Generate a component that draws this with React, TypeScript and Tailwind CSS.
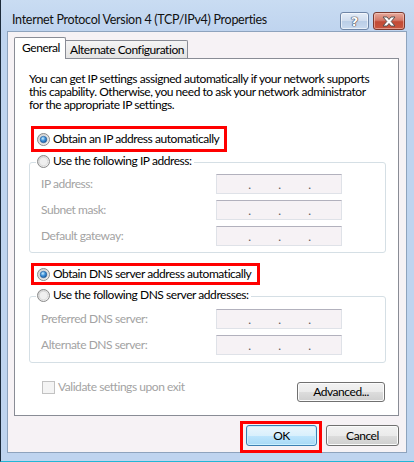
import React from "react";

function Radio({ checked }: { checked?: boolean }) {
  return (
    <svg width="13" height="13" viewBox="0 0 13 13" className="shrink-0 block">
      <defs>
        <linearGradient id="radioBg" x1="0" y1="0" x2="1" y2="1">
          <stop offset="0" stopColor="#cdcdcd" />
          <stop offset="1" stopColor="#f8f8f8" />
        </linearGradient>
        <radialGradient id="radioDot" cx="0.4" cy="0.35" r="0.75">
          <stop offset="0" stopColor="#cdefff" />
          <stop offset="0.45" stopColor="#3f92da" />
          <stop offset="1" stopColor="#0f4d90" />
        </radialGradient>
      </defs>
      <circle cx="6.5" cy="6.5" r="6" fill="url(#radioBg)" stroke="#8a8a8a" />
      <circle cx="6.5" cy="6.5" r="4.2" fill="#efefef" stroke="#d2d2d2" strokeWidth="0.6" />
      {checked && (
        <circle cx="6.5" cy="6.5" r="3.3" fill="url(#radioDot)" stroke="#1b4f8a" strokeWidth="0.5" />
      )}
    </svg>
  );
}

function IpBox() {
  return (
    <div className="w-[126px] h-[20px] border border-[#dfe2e8] border-t-[#b2b1bd] bg-[#f6f2f5] flex items-end pl-[31px] gap-[27px] pb-[3px] text-[12px] leading-[10px] text-[#5a5a5a]">
      <span className="w-[3px] text-center">.</span>
      <span className="w-[3px] text-center">.</span>
      <span className="w-[3px] text-center">.</span>
    </div>
  );
}

function FieldRow({ label }: { label: string }) {
  return (
    <div className="flex items-center h-[20px] pl-[11px]">
      <span className="w-[175px] text-[#a3a3a3] whitespace-nowrap">{label}</span>
      <IpBox />
    </div>
  );
}

export default function App() {
  return (
    <div className="w-[414px] h-[462px] bg-[#bfd4ef] border-l border-l-[#1c2a3a] border-b border-b-[#22b6d6] flex flex-col font-['Lato','Open_Sans',sans-serif] text-[12px] leading-[16px] tracking-[-0.45px] text-black select-none whitespace-nowrap">
      {/* Title bar */}
      <div className="h-[31px] flex shrink-0 bg-[linear-gradient(#c9dcf2,#bfd4ef)]">
        <div className="pl-[11px] pt-[11px] text-[12.5px] leading-[18px] tracking-[-0.3px] text-[#111]">
          Internet Protocol Version 4 (TCP/IPv4) Properties
        </div>
        <div className="ml-auto flex gap-[4px] pt-[12px] pr-[9px]">
          <div className="w-[29px] h-[18px] rounded-[3px] border border-[#6e85a6] bg-[linear-gradient(#e4edf8_0%,#cfdcee_50%,#b9cde6_50%,#c9daef_100%)] shadow-[inset_0_0_0_1px_rgba(255,255,255,0.6)] flex items-center justify-center">
            <span className="font-['DejaVu_Sans',sans-serif] font-bold text-[13px] leading-[13px] tracking-normal text-white [text-shadow:0_0_1px_#334,0_0_1px_#334,0_0_1px_#334]">?</span>
          </div>
          <div className="w-[32px] h-[18px] rounded-[3px] border border-[#7a3a30] bg-[linear-gradient(#e6a99c_0%,#d47a69_45%,#c24a35_55%,#c9563f_100%)] shadow-[inset_0_0_0_1px_rgba(255,220,210,0.5)] flex items-center justify-center">
            <svg width="16" height="11" viewBox="0 0 16 11">
              <path
                d="M2 1 H6 L8 3.5 L10 1 H14 L10.2 5.5 L14 10 H10 L8 7.5 L6 10 H2 L5.8 5.5 Z"
                fill="#ffffff"
                stroke="#4a4a4a"
                strokeWidth="0.9"
                strokeLinejoin="round"
              />
            </svg>
          </div>
        </div>
      </div>

      {/* Frame around body */}
      <div className="flex-1 pl-[6px] pr-[7px] pb-[8px] flex">
        <div className="w-[400px] h-[422px] border border-[#8ea3bd] bg-[#f6f2f5] pt-[5px] pl-[6px] pr-[7px] pb-[6px] flex flex-col">
          {/* Tabs */}
          <div className="flex items-end h-[21px]">
            <div className="relative z-10 h-[22px] -mb-[1px] w-[52px] border border-b-0 border-[#898c95] bg-white rounded-t-[2px] pl-[7px] pt-[2px]">
              General
            </div>
            <div className="h-[18px] w-[122px] border border-l-0 border-b-0 border-[#898c95] rounded-tr-[2px] bg-[linear-gradient(#f4f4f4,#e3e3e3)] pl-[4px] pt-[1px]">
              Alternate Configuration
            </div>
          </div>

          {/* Tab panel */}
          <div className="h-[358px] border border-[#898c95] bg-white flex flex-col">
            <p className="mt-[13px] pl-[14px] leading-[13px]">
              You can get IP settings assigned automatically if your network supports
              <br />
              this capability. Otherwise, you need to ask your network administrator
              <br />
              for the appropriate IP settings.
            </p>

            {/* Obtain IP automatically */}
            <div className="mt-[20px] ml-[22px] h-[16px] flex items-center gap-[3px] relative w-fit">
              <Radio checked />
              <span>Obtain an IP address automatically</span>
              <div className="absolute left-[-6px] top-[-5px] w-[196px] h-[26px] border-[3px] border-[#ff0000]" />
            </div>

            {/* Manual IP group */}
            <div className="mt-[15px] ml-[14px] w-[357px] border border-[#d5dfe5] rounded-[3px] pb-[6px] flex flex-col">
              <div className="-mt-[10px] ml-[6px] pl-[1px] pr-[2px] h-[16px] w-fit bg-white flex items-center gap-[3px]">
                <Radio />
                <span>Use the following IP address:</span>
              </div>
              <div className="mt-[5px] flex flex-col gap-[6px]">
                <FieldRow label="IP address:" />
                <FieldRow label="Subnet mask:" />
                <FieldRow label="Default gateway:" />
              </div>
            </div>

            {/* Obtain DNS automatically */}
            <div className="mt-[13px] ml-[22px] h-[16px] flex items-center gap-[3px] relative w-fit">
              <Radio checked />
              <span>Obtain DNS server address automatically</span>
              <div className="absolute left-[-6px] top-[-3px] w-[229px] h-[22px] border-[3px] border-[#ff0000]" />
            </div>

            {/* Manual DNS group */}
            <div className="mt-[14px] ml-[14px] w-[357px] border border-[#d5dfe5] rounded-[3px] pb-[7px] flex flex-col">
              <div className="-mt-[10px] ml-[6px] pl-[1px] pr-[2px] h-[16px] w-fit bg-white flex items-center gap-[3px]">
                <Radio />
                <span>Use the following DNS server addresses:</span>
              </div>
              <div className="mt-[6px] flex flex-col gap-[6px]">
                <FieldRow label="Preferred DNS server:" />
                <FieldRow label="Alternate DNS server:" />
              </div>
            </div>

            {/* Validate + Advanced */}
            <div className="mt-[17px] flex items-start pl-[27px] pr-[13px]">
              <div className="flex items-center gap-[3px] h-[14px]">
                <div className="w-[13px] h-[13px] border border-[#c2c2c2] bg-[#f4f4f4]" />
                <span className="text-[#a3a3a3]">Validate settings upon exit</span>
              </div>
              <button className="ml-auto mt-[2px] w-[88px] h-[20px] rounded-[3px] border border-[#707070] bg-[linear-gradient(#f2f2f2_0%,#ebebeb_50%,#dddddd_50%,#cfcfcf_100%)] shadow-[inset_0_0_0_1px_#fbfbfb] text-[12px] leading-[16px] text-black">
                Advanced...
              </button>
            </div>
          </div>

          {/* Bottom buttons */}
          <div className="mt-[9px] flex justify-end gap-[9px]">
            <div className="relative">
              <button className="w-[71px] h-[21px] rounded-[3px] border border-[#3c7fb1] bg-[linear-gradient(#eaf6fd_0%,#d9f0fc_50%,#bee6fd_50%,#a7d9f5_100%)] shadow-[inset_0_0_0_1px_#c8f0ff] text-[12px] leading-[16px] text-black">
                OK
              </button>
              <div className="absolute left-[-6px] top-[-4px] w-[82px] h-[32px] border-[3px] border-[#ff0000]" />
            </div>
            <button className="w-[73px] h-[21px] rounded-[3px] border border-[#707070] bg-[linear-gradient(#f2f2f2_0%,#ebebeb_50%,#dddddd_50%,#cfcfcf_100%)] shadow-[inset_0_0_0_1px_#fbfbfb] text-[12px] leading-[16px] text-black">
              Cancel
            </button>
          </div>
        </div>
      </div>
    </div>
  );
}
